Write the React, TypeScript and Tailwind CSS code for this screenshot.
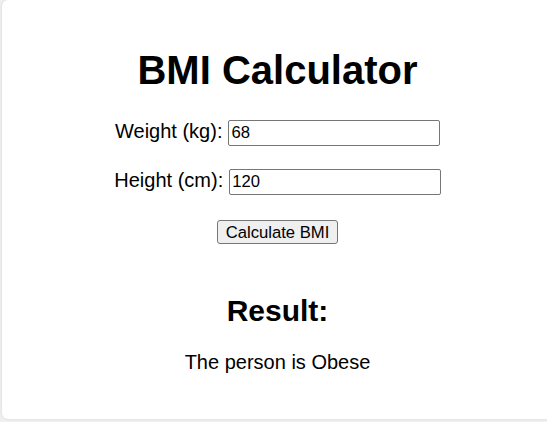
import { useState } from "react";

export default function App(): JSX.Element {
  const [weight, setWeight] = useState("68");
  const [height, setHeight] = useState("120");
  const [result, setResult] = useState("Obese");

  function calculate(): void {
    const w = parseFloat(weight);
    const h = parseFloat(height) / 100;
    if (!w || !h) return;
    const bmi = w / (h * h);
    if (bmi < 18.5) setResult("Underweight");
    else if (bmi < 25) setResult("Normal");
    else if (bmi < 30) setResult("Overweight");
    else setResult("Obese");
  }

  return (
    <div className="h-[422px] w-[547px] overflow-hidden bg-[#f0f0f0] font-['Liberation_Sans',Arial,sans-serif] text-black">
      <div className="ml-[2px] h-[419px] w-[551px] rounded-[6px] bg-white pt-[20px] text-center shadow-[0_0_3px_rgba(0,0,0,0.12)]">
        <h1 className="mt-[27px] mb-[27px] text-[40px] leading-[46px] font-bold">BMI Calculator</h1>

        <div className="flex items-baseline justify-center gap-[5.5px] text-[20px] leading-[23px]">
          <label htmlFor="weight">Weight (kg):</label>
          <input
            id="weight"
            className="h-[26px] w-[212px] rounded-[2px] border border-[#767676] px-[2.5px] text-left text-[16.67px] leading-[19px]"
            value={weight}
            onChange={(e) => setWeight(e.target.value)}
          />
        </div>

        <div className="mt-[23px] flex items-baseline justify-center gap-[5.5px] text-[20px] leading-[23px]">
          <label htmlFor="height">Height (cm):</label>
          <input
            id="height"
            className="h-[26px] w-[212px] rounded-[2px] border border-[#767676] px-[2.5px] text-left text-[16.67px] leading-[19px]"
            value={height}
            onChange={(e) => setHeight(e.target.value)}
          />
        </div>

        <button
          type="button"
          className="mt-[25px] h-[24px] rounded-[3px] border border-[#767676] bg-[#efefef] px-[8px] text-[16.67px] leading-[19px]"
          onClick={calculate}
        >
          Calculate BMI
        </button>

        <h2 className="mt-[48px] text-[30px] leading-[35px] font-bold">Result:</h2>
        <p className="mt-[23px] text-[20px] leading-[23px]">The person is {result}</p>
      </div>
    </div>
  );
}
